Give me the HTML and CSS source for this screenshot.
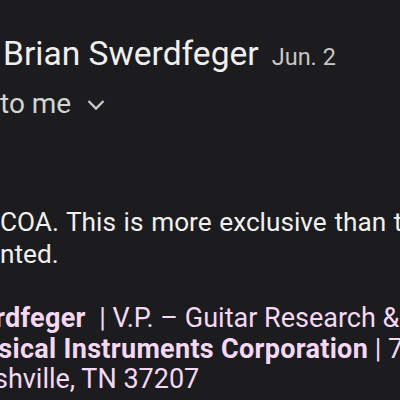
FILE: index.html
```html
<!DOCTYPE html>
<html lang="en">
<head>
    <meta charset="UTF-8">
    <meta name="viewport" content="width=device-width, initial-scale=1.0">
    <title>Brian Swerdfeger</title>
    <link rel="stylesheet" href="styles.css">
</head>
<body>
    <div class="mail">
        <div class="header">
            <div class="from">
                <span class="sender">Brian Swerdfeger</span>
                <span class="date">Jun. 2</span>
            </div>
            <div class="to">
                <span>to me</span>
                <svg class="chevron" width="18" height="12" viewBox="0 0 18 12">
                    <path d="M1.5 2 L9 9.5 L16.5 2" fill="none" stroke="#c8c8c8" stroke-width="2.4"/>
                </svg>
            </div>
        </div>

        <div class="message">
            <div class="line">COA. This is more exclusive than the</div>
            <div class="line">nted.</div>
        </div>

        <div class="signature">
            <div class="line name"><b>rdfeger</b>&nbsp; | V.P. – Guitar Research &amp; Development</div>
            <div class="line company"><b>Musical Instruments Corporation</b> | 709 Spence Lane,</div>
            <div class="line city">Nashville, TN 37207</div>
        </div>
    </div>
</body>
</html>
```

FILE: styles.css
```css
body {
    margin: 0;
    background-color: #1c1c1e;
    font-family: Roboto, "Noto Sans", sans-serif;
    overflow: hidden;
}

.mail {
    width: 400px;
    height: 400px;
    overflow: hidden;
}

.header {
    padding: 34px 0 0 3px;
}

.from {
    display: flex;
    align-items: baseline;
    gap: 13px;
    white-space: nowrap;
    line-height: 40px;
}

.sender {
    font-size: 33.6px;
    color: #efefef;
}

.date {
    font-size: 23.5px;
    color: #c6c6c6;
}

.to {
    display: flex;
    align-items: center;
    gap: 16px;
    margin-top: 10px;
    margin-left: -3px;
    font-size: 28px;
    line-height: 34px;
    color: #d4d4d4;
}

.chevron {
    margin-top: 2px;
}

.message {
    margin-top: 85px;
    font-size: 26.2px;
    line-height: 32px;
    word-spacing: 1.2px;
    color: #f0f0f0;
}

.line {
    white-space: nowrap;
}

.signature {
    margin-top: 33px;
    font-size: 27px;
    line-height: 30.5px;
    color: #f4d8f4;
}

.signature b {
    font-weight: 700;
    letter-spacing: 0.3px;
}

/* first letters run off the left edge */
.name {
    text-indent: -5px;
}

.company {
    text-indent: -41px;
}

.city {
    text-indent: -40px;
}
```
